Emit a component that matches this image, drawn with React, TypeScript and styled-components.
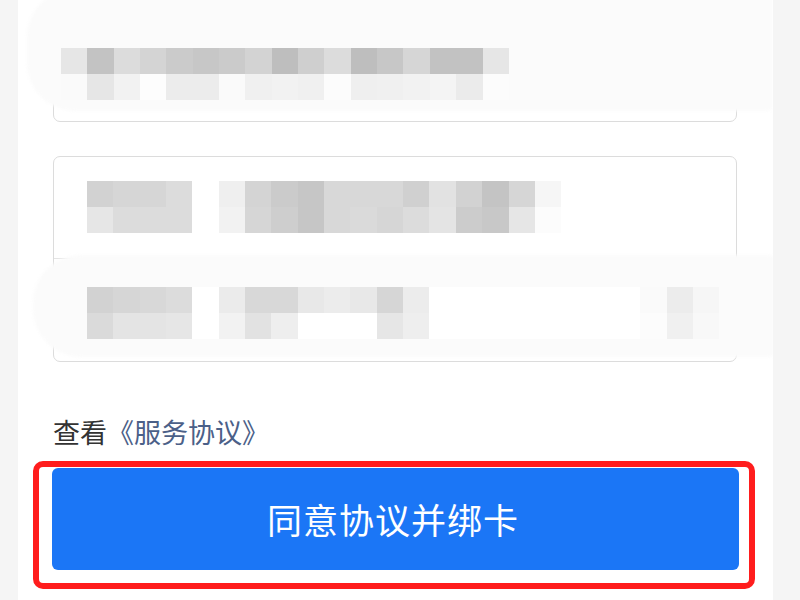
import React from "react";
import styled, { createGlobalStyle } from "styled-components";

const GlobalStyle = createGlobalStyle`
  html, body {
    margin: 0;
    padding: 0;
    background: #f5f5f5;
    font-family: "Noto Sans CJK SC", "Noto Sans", sans-serif;
  }
`;

// grey levels of the pixelated (masked) card data, "ff" = empty cell
const CARD_ONE: string[][] = [
  ["e6", "c3", "dc", "d4", "cb", "c7", "cb", "d3", "be", "cf", "dc", "be", "c7", "d6", "c2", "c2", "e6"],
  ["fa", "e6", "f2", "fd", "ec", "ec", "fa", "f0", "f2", "f0", "fc", "ef", "f0", "f2", "f4", "eb", "fc"],
];

const FIELD_ONE: string[][] = [
  ["d2", "d6", "d6", "dc", "ff", "ef", "d4", "cb", "c6", "d8", "d8", "d8", "d0", "e2", "d2", "c4", "d6", "f6"],
  ["e6", "dc", "dc", "dc", "ff", "f2", "d6", "ce", "c6", "d8", "da", "d6", "dc", "e4", "cc", "c8", "e6", "fc"],
];

const FIELD_TWO: string[][] = [
  ["d2", "d6", "d8", "dc", "ff", "eb", "d8", "d8", "e8", "ec", "e8", "d6", "ec", "ff", "ff", "ff", "ff", "ff", "ff", "ff", "ff", "fa", "ec", "f6"],
  ["da", "e4", "e4", "e6", "ff", "f2", "e2", "ee", "ff", "ff", "ff", "e6", "ee", "ff", "ff", "ff", "ff", "ff", "ff", "ff", "ff", "fc", "f0", "f8"],
];

const Panel = styled.div`
  margin-left: 18px;
  width: 755px;
  height: 600px;
  background: #fff;
  padding-left: 35px;
  box-sizing: border-box;
  overflow: hidden;
  display: flex;
  flex-direction: column;
`;

const Card = styled.div<{ $gap?: number }>`
  position: relative;
  width: 684px;
  margin-top: ${(p) => p.$gap ?? 0}px;
  border: 1px solid #dcdcdc;
  border-radius: 7px;
  box-sizing: border-box;
  display: flex;
  flex-direction: column;
`;

const Field = styled.div<{ $h: number; $pt: number; $pl: number; $divider?: boolean }>`
  position: relative;
  height: ${(p) => p.$h}px;
  padding: ${(p) => p.$pt}px 0 0 ${(p) => p.$pl}px;
  box-sizing: border-box;
  border-top: ${(p) => (p.$divider ? "1px solid #e4e4e4" : "none")};
`;

const Smudge = styled.div<{ $top: number; $left: number; $right: number; $height: number }>`
  position: absolute;
  top: ${(p) => p.$top}px;
  left: ${(p) => p.$left}px;
  right: ${(p) => p.$right}px;
  height: ${(p) => p.$height}px;
  background: #fbfbfb;
  border-radius: 48px 4px 4px 48px;
  filter: blur(1.5px);
  z-index: 1;
`;

const Mosaic = styled.div`
  position: relative;
  z-index: 2;
  display: flex;
  flex-direction: column;
`;

const MosaicRow = styled.div`
  display: flex;
  height: 26px;
`;

const Cell = styled.div<{ $tone: string }>`
  width: 26.35px;
  flex: none;
  background: #${(p) => p.$tone.repeat(3)};
`;

const Agreement = styled.div`
  margin-top: 52px;
  font-size: 27px;
  line-height: 36px;
  color: #333;
  white-space: nowrap;
`;

const Link = styled.span`
  color: #4b6088;
`;

const ButtonWrap = styled.div`
  position: relative;
  margin-top: 18px;
  width: 687px;
  margin-left: -1px;
`;

const BindButton = styled.button`
  display: block;
  width: 100%;
  height: 102px;
  border: none;
  border-radius: 6px;
  background: #1b76f6;
  color: #fff;
  font-family: "Noto Sans CJK SC", "Noto Sans", sans-serif;
  font-size: 35px;
  letter-spacing: 1px;
  padding: 0 5px 2px 0;
  cursor: pointer;
`;

const Highlight = styled.div`
  position: absolute;
  top: -7px;
  left: -19px;
  right: -16px;
  bottom: -19px;
  border: 6px solid #ff1d1d;
  border-radius: 10px;
  pointer-events: none;
`;

const Pixels = ({ rows }: { rows: string[][] }) => (
  <Mosaic>
    {rows.map((row, i) => (
      <MosaicRow key={i}>
        {row.map((tone, j) => (
          <Cell key={j} $tone={tone} />
        ))}
      </MosaicRow>
    ))}
  </Mosaic>
);

const App = () => {
  return (
    <>
      <GlobalStyle />
      <Panel>
        <Card $gap={-10}>
          <Smudge $top={-2} $left={-27} $right={-36} $height={122} />
          <Field $h={130} $pt={57} $pl={7}>
            <Pixels rows={CARD_ONE} />
          </Field>
        </Card>

        <Card $gap={34}>
          <Field $h={101} $pt={24} $pl={33}>
            <Pixels rows={FIELD_ONE} />
          </Field>
          <Field $h={103} $pt={28} $pl={33} $divider>
            <Smudge $top={-4} $left={-21} $right={-38} $height={102} />
            <Pixels rows={FIELD_TWO} />
          </Field>
        </Card>

        <Agreement>
          查看<Link>《服务协议》</Link>
        </Agreement>

        <ButtonWrap>
          <BindButton>同意协议并绑卡</BindButton>
          <Highlight />
        </ButtonWrap>
      </Panel>
    </>
  );
};

export default App;
